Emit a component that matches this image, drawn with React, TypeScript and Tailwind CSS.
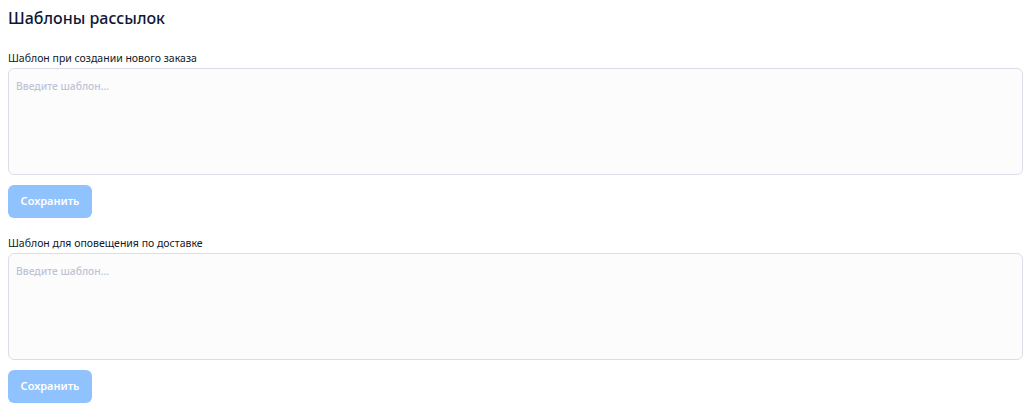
const TEMPLATES = [
  { id: "new-order", label: "Шаблон при создании нового заказа" },
  { id: "delivery", label: "Шаблон для оповещения по доставке" },
];

export default function App() {
  return (
    <div className="min-h-screen bg-white pl-2 pr-[7px] pt-[6px] font-['Noto_Sans',sans-serif]">
      <h1 className="text-[16px] font-medium leading-6 text-[#0f1838]">Шаблоны рассылок</h1>

      <div className="mt-5 flex flex-col gap-[17px]">
        {TEMPLATES.map((t) => (
          <div key={t.id} className="flex flex-col">
            <label htmlFor={t.id} className="text-[10.5px] leading-[16px] text-[#111827]">
              {t.label}
            </label>
            <textarea
              id={t.id}
              placeholder="Введите шаблон..."
              className="mt-[2px] h-[107px] w-full resize-none rounded-md border border-[#dddde9] bg-[#fcfcfd] px-[7px] py-[9px] text-[10.3px] font-medium leading-[16px] placeholder:text-[#bfc3d4] focus:outline-none"
            />
            <button
              disabled
              className="mt-[10px] h-[33px] w-[84px] rounded-md bg-[#90c3fe] text-[11px] font-semibold text-white"
            >
              Сохранить
            </button>
          </div>
        ))}
      </div>
    </div>
  );
}
